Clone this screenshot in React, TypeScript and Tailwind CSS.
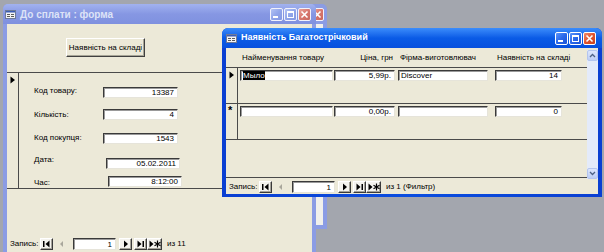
import React from "react";

type BtnKind = "min" | "max" | "close";

function TitleBtn({ kind, active }: { kind: BtnKind; active: boolean }) {
  const base = "w-[13px] h-[13px] rounded-[2px] border flex items-center justify-center";
  let cls = "";
  if (kind === "close") {
    cls = active
      ? "bg-gradient-to-br from-[#f08a6a] via-[#e0532c] to-[#c8411e] border-white"
      : "bg-gradient-to-br from-[#e8a39a] via-[#d8776e] to-[#c9685f] border-[#f2f2fb]";
  } else {
    cls = active
      ? "bg-gradient-to-br from-[#5b93fa] via-[#2a68ea] to-[#1b53d6] border-white"
      : "bg-gradient-to-br from-[#b3c3f3] via-[#91a5ea] to-[#8397e2] border-[#f2f2fb]";
  }
  return (
    <div className={`${base} ${cls}`}>
      {kind === "min" && <div className="w-[5px] h-[2px] bg-white mt-[5px] -ml-[3px]" />}
      {kind === "max" && <div className="w-[7px] h-[7px] border border-white border-t-2" />}
      {kind === "close" && (
        <svg width="9" height="9" viewBox="0 0 9 9">
          <path d="M1.5 1.5 L7.5 7.5 M7.5 1.5 L1.5 7.5" stroke="white" strokeWidth="1.6" />
        </svg>
      )}
    </div>
  );
}

function FormIcon() {
  return (
    <svg width="11" height="9" viewBox="0 0 11 9">
      <rect x="0.5" y="0.5" width="10" height="8" fill="#f4f4f4" stroke="#6d7a99" />
      <rect x="1" y="1" width="9" height="1.5" fill="#3a5db4" />
      <rect x="2" y="4" width="3" height="1" fill="#5b5b5b" />
      <rect x="6" y="4" width="3" height="1" fill="#5b5b5b" />
      <rect x="2" y="6" width="3" height="1" fill="#5b5b5b" />
      <rect x="6" y="6" width="3" height="1" fill="#5b5b5b" />
    </svg>
  );
}

function Field({ className, children, right }: { className: string; children?: React.ReactNode; right?: boolean }) {
  return (
    <div
      className={`h-[11px] bg-white border border-t-[#3a3a3a] border-l-[#3a3a3a] border-r-[#e6e4da] border-b-[#e6e4da] shadow-[inset_1px_1px_0_#9a9a9a] text-[8px] leading-[9px] whitespace-nowrap overflow-hidden flex items-center ${
        right ? "justify-end pr-[3px]" : "pl-[2px]"
      } ${className}`}
    >
      {children}
    </div>
  );
}

type NavKind = "first" | "prev" | "next" | "last" | "new";

function NavBtn({ kind, className = "" }: { kind: NavKind; className?: string }) {
  const disabled = kind === "prev";
  const w = kind === "new" ? "w-[15px]" : "w-[13px]";
  return (
    <div
      className={`${w} h-[12px] flex items-center justify-center shrink-0 ${
        disabled
          ? ""
          : "bg-[#f4f3ee] border border-t-[#ffffff] border-l-[#ffffff] border-r-[#3a3a3a] border-b-[#3a3a3a] shadow-[inset_-1px_-1px_0_#a5a39a]"
      } ${className}`}
    >
      <svg width={kind === "new" ? 13 : 11} height="10" viewBox={kind === "new" ? "0 0 13 10" : "0 0 11 10"}>
        {kind === "first" && (
          <>
            <rect x="2" y="2" width="1.5" height="6" fill="#000" />
            <path d="M8.5 1.5 L8.5 8.5 L4.5 5 Z" fill="#000" />
          </>
        )}
        {kind === "prev" && <path d="M7 2 L7 8 L4 5 Z" fill="#a9a79c" />}
        {kind === "next" && <path d="M4 1.5 L4 8.5 L8 5 Z" fill="#000" />}
        {kind === "last" && (
          <>
            <path d="M2.5 1.5 L2.5 8.5 L6.5 5 Z" fill="#000" />
            <rect x="7.5" y="2" width="1.5" height="6" fill="#000" />
          </>
        )}
        {kind === "new" && (
          <>
            <path d="M1.5 1.5 L1.5 8.5 L5.5 5 Z" fill="#000" />
            <path d="M9.5 1.5 L9.5 8.5 M6.5 3.3 L12.5 6.7 M6.5 6.7 L12.5 3.3" stroke="#000" strokeWidth="1.2" />
          </>
        )}
      </svg>
    </div>
  );
}

function NavBar({ total, className = "" }: { total: string; className?: string }) {
  return (
    <div className={`flex items-center text-[8px] text-black ${className}`}>
      <span className="w-[33px] pl-[3px] shrink-0">Запись:</span>
      <NavBtn kind="first" />
      <NavBtn kind="prev" className="ml-[2px]" />
      <Field className="w-[43px] h-[12px] ml-[5px] shrink-0" right>
        1
      </Field>
      <NavBtn kind="next" className="ml-[3px]" />
      <NavBtn kind="last" className="ml-[2px]" />
      <NavBtn kind="new" />
      <span className="ml-[5px] whitespace-nowrap">{total}</span>
    </div>
  );
}

function Triangle() {
  return (
    <svg width="6" height="8" viewBox="0 0 6 8">
      <path d="M0.5 0.5 L0.5 7.5 L5 4 Z" fill="#000" />
    </svg>
  );
}

function BackRow({
  label,
  value,
  fieldCls,
  labelCls = "",
  rowCls,
}: {
  label: string;
  value: string;
  fieldCls: string;
  labelCls?: string;
  rowCls: string;
}) {
  return (
    <div className={`flex items-center h-[11px] ${rowCls}`}>
      <span className={`w-[84px] pl-[15px] text-[8px] leading-[9px] whitespace-nowrap shrink-0 ${labelCls}`}>{label}</span>
      <Field className={fieldCls} right>
        {value}
      </Field>
    </div>
  );
}

export default function App() {
  return (
    <div className="relative w-[604px] h-[252px] overflow-hidden bg-[#a3a6ae] font-['Liberation_Sans',Arial,sans-serif] text-black">
      {/* third window, mostly hidden */}
      <div className="absolute left-[200px] top-[4px] w-[127px] h-[225px] bg-[#8b9ce4] rounded-t-[5px] flex flex-col px-[4px] pb-[4px]">
        <div className="h-[20px] flex items-center justify-end -mr-[1px]">
          <TitleBtn kind="close" active={false} />
        </div>
        <div className="flex-1 bg-[#f1f0eb]" />
      </div>

      {/* back window */}
      <div className="absolute left-[3px] top-[4px] w-[313px] h-[256px] bg-[#8b9ce4] rounded-t-[5px] flex flex-col px-[4px] pb-[4px]">
        <div className="h-[20px] -mx-[4px] px-[2px] flex items-center rounded-t-[5px] bg-gradient-to-b from-[#a2b2ef] via-[#8697e3] to-[#7f91df]">
          <FormIcon />
          <span className="ml-[4px] text-[10px] font-bold text-[#dde3f7] whitespace-nowrap">До сплати : форма</span>
          <div className="ml-auto flex gap-[1px] mr-[3px]">
            <TitleBtn kind="min" active={false} />
            <TitleBtn kind="max" active={false} />
            <TitleBtn kind="close" active={false} />
          </div>
        </div>
        <div className="flex-1 bg-[#ece9d8] flex flex-col">
          {/* header */}
          <div className="h-[48px] pt-[14px] pl-[59px] shrink-0">
            <div className="w-[79px] h-[19px] bg-[#ece9d8] border border-t-white border-l-white border-r-[#404040] border-b-[#404040] shadow-[inset_-1px_-1px_0_#a7a597] flex items-center justify-center text-[8px] whitespace-nowrap">
              Наявність на складі
            </div>
          </div>
          <div className="h-px bg-[#4a4a4a] shrink-0" />
          {/* detail */}
          <div className="h-[115px] flex shrink-0">
            <div className="w-[12px] border-r border-[#4a4a4a] pl-[3px] pt-[3px]">
              <Triangle />
            </div>
            <div className="flex-1 flex flex-col pt-[14px]">
              <BackRow label="Код товару:" value="13387" fieldCls="w-[75px]" labelCls="mb-[4px]" rowCls="" />
              <BackRow label="Кількість:" value="4" fieldCls="w-[75px]" labelCls="mb-[1px]" rowCls="mt-[11px]" />
              <BackRow label="Код покупця:" value="1543" fieldCls="w-[75px]" labelCls="mb-[3px]" rowCls="mt-[13px]" />
              <BackRow label="Дата:" value="05.02.2011" fieldCls="w-[74px] ml-[3px]" labelCls="mb-[8px]" rowCls="mt-[14px]" />
              <BackRow label="Час:" value="8:12:00" fieldCls="w-[74px] ml-[5px]" labelCls="mt-[1px]" rowCls="mt-[7px]" />
            </div>
          </div>
          <div className="h-px bg-[#4a4a4a] shrink-0" />
          <div className="h-[48px] shrink-0" />
          <NavBar total="из 11" className="h-[14px] shrink-0" />
        </div>
      </div>

      {/* front window */}
      <div className="absolute left-[222px] top-[28px] w-[380px] h-[169px] bg-gradient-to-r from-[#0a3fd2] via-[#0b4ee0] to-[#0a3fd2] rounded-t-[6px] flex flex-col px-[4px] pb-[3px]">
        <div className="h-[20px] -mx-[4px] px-[4px] flex items-center rounded-t-[6px] bg-gradient-to-b from-[#3b8cfb] via-[#0a5be6] to-[#0750de]">
          <FormIcon />
          <span className="ml-[4px] text-[9px] font-bold text-white whitespace-nowrap">Наявність Багатострічковий</span>
          <div className="ml-auto flex gap-[1px] mr-[2px]">
            <TitleBtn kind="min" active />
            <TitleBtn kind="max" active />
            <TitleBtn kind="close" active />
          </div>
        </div>
        <div className="flex-1 bg-[#ece9d8] flex flex-col">
          <div className="h-[132px] flex shrink-0">
            <div className="flex-1 flex flex-col">
              {/* header */}
              <div className="h-[19px] flex items-center pl-[14px] text-[8px] whitespace-nowrap shrink-0">
                <span className="w-[94px] pl-[2px]">Найменування товару</span>
                <span className="w-[61px] text-right pr-[2px]">Ціна, грн</span>
                <span className="w-[90px] ml-[3px] pl-[2px]">Фірма-виготовлювач</span>
                <span className="w-[67px] ml-[7px] pl-[2px]">Наявність на складі</span>
              </div>
              <div className="h-px bg-[#4a4a4a] shrink-0" />
              {/* record 1 */}
              <div className="h-[35px] flex shrink-0">
                <div className="w-[12px] border-r border-[#4a4a4a] pl-[3px] pt-[3px]">
                  <Triangle />
                </div>
                <div className="flex items-start pt-[2px] ml-[2px]">
                  <Field className="w-[93px]">
                    <span className="bg-black text-white leading-[9px]">Мыло</span>
                  </Field>
                  <Field className="w-[61px] ml-[1px]" right>
                    5,99р.
                  </Field>
                  <Field className="w-[90px] ml-[3px]">Discover</Field>
                  <Field className="w-[67px] ml-[7px]" right>
                    14
                  </Field>
                </div>
              </div>
              <div className="h-px bg-[#4a4a4a] shrink-0" />
              {/* record 2 (new) */}
              <div className="h-[35px] flex shrink-0">
                <div className="w-[12px] border-r border-[#4a4a4a] pl-[2px] pt-[1px] text-[11px] leading-[11px] font-bold">
                  *
                </div>
                <div className="flex items-start pt-[2px] ml-[2px]">
                  <Field className="w-[93px]" />
                  <Field className="w-[61px] ml-[1px]" right>
                    0,00р.
                  </Field>
                  <Field className="w-[90px] ml-[3px]" />
                  <Field className="w-[67px] ml-[7px]" right>
                    0
                  </Field>
                </div>
              </div>
              <div className="h-px bg-[#4a4a4a] shrink-0" />
              <div className="flex-1" />
              <div className="h-px bg-[#4a4a4a] shrink-0 mb-[2px]" />
            </div>
            {/* scrollbar */}
            <div className="w-[11px] mt-[2px] mb-[1px] bg-[#e4ebfa] flex flex-col justify-between">
              <div className="h-[11px] bg-gradient-to-b from-[#dce6fd] to-[#bccdf5] border border-[#b3c5ef] rounded-[2px] flex items-center justify-center">
                <svg width="7" height="5" viewBox="0 0 7 5">
                  <path d="M1 4 L3.5 1.5 L6 4" stroke="#4d6185" strokeWidth="1.3" fill="none" />
                </svg>
              </div>
              <div className="h-[11px] bg-gradient-to-b from-[#dce6fd] to-[#bccdf5] border border-[#b3c5ef] rounded-[2px] flex items-center justify-center">
                <svg width="7" height="5" viewBox="0 0 7 5">
                  <path d="M1 1 L3.5 3.5 L6 1" stroke="#4d6185" strokeWidth="1.3" fill="none" />
                </svg>
              </div>
            </div>
          </div>
          <NavBar total="из 1 (Фильтр)" className="flex-1" />
        </div>
      </div>
    </div>
  );
}
